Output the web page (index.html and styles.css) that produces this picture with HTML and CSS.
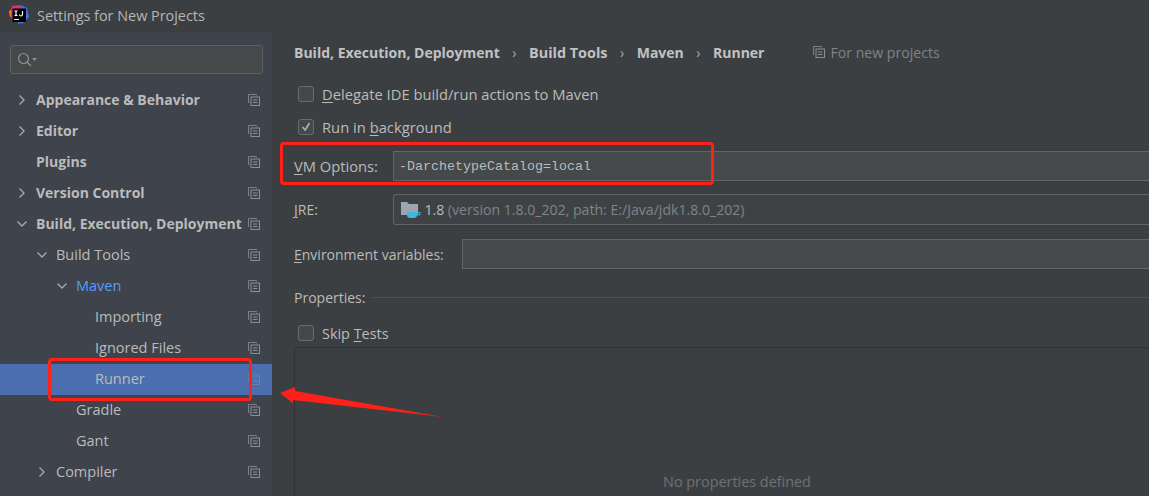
FILE: index.html
```html
<!DOCTYPE html>
<html lang="en">
<head>
    <meta charset="UTF-8">
    <meta name="viewport" content="width=device-width, initial-scale=1.0">
    <title>Settings for New Projects</title>
    <link rel="stylesheet" href="styles.css">
</head>
<body>
    <svg class="defs" width="0" height="0">
        <symbol id="copy" viewBox="0 0 12 12">
            <path d="M8.5 1.5V.5H.5v8h1" fill="none" stroke="#7d8186"/>
            <rect x="3" y="3" width="8.5" height="8.5" fill="none" stroke="#8b8f94"/>
            <path d="M5 6h4.5M5 8.500h4.500" stroke="#8b8f94"/>
        </symbol>
        <symbol id="arrow-right" viewBox="0 0 10 12">
            <path d="M2.500 1.500 7 6l-4.500 4.500" fill="none" stroke="#a8abae" stroke-width="1.300"/>
        </symbol>
        <symbol id="arrow-down" viewBox="0 0 12 10">
            <path d="M1.500 2.500 6 7l4.500-4.500" fill="none" stroke="#a8abae" stroke-width="1.300"/>
        </symbol>
    </svg>

    <header class="titlebar">
        <svg class="logo" width="20" height="20" viewBox="0 0 20 20">
            <path d="M3 1l8-1 2 4-7 12-4-3z" fill="#fe2857"/>
            <path d="M0 6l4-2 1 7-4 1z" fill="#fc801d"/>
            <path d="M12 0l6 3 2 9-5 6-6 1z" fill="#3f6fe0"/>
            <path d="M2 3h9l2 3-8 9-3-3z" fill="#b832a8"/>
            <rect x="3.500" y="3.500" width="13.500" height="13.500" fill="#000"/>
            <rect x="5" y="14" width="5" height="1" fill="#fff"/>
            <path d="M5.500 6h3M7 6v4.500M5.500 10.500h3M13.500 6v3.500a1.500 1.500 0 0 1-3 0" fill="none" stroke="#fff" stroke-width="1.200"/>
        </svg>
        <span class="title">Settings for New Projects</span>
    </header>

    <div class="content">
        <nav class="sidebar">
            <div class="search">
                <svg width="22" height="16" viewBox="0 0 22 16">
                    <circle cx="6.500" cy="6.500" r="5" fill="none" stroke="#8b8f90" stroke-width="1.200"/>
                    <path d="M10 10l4 4" stroke="#8b8f90" stroke-width="1.400"/>
                    <path d="M15 6h5l-2.500 3z" fill="#8b8f90"/>
                </svg>
            </div>
            <ul class="tree">
                <li class="row bold level-1"><svg class="arrow"><use href="#arrow-right"/></svg><span>Appearance &amp; Behavior</span><svg class="copy"><use href="#copy"/></svg></li>
                <li class="row bold level-1"><svg class="arrow"><use href="#arrow-right"/></svg><span>Editor</span><svg class="copy"><use href="#copy"/></svg></li>
                <li class="row bold level-1"><i class="arrow"></i><span>Plugins</span><svg class="copy"><use href="#copy"/></svg></li>
                <li class="row bold level-1"><svg class="arrow"><use href="#arrow-right"/></svg><span>Version Control</span><svg class="copy"><use href="#copy"/></svg></li>
                <li class="row bold level-1"><svg class="arrow"><use href="#arrow-down"/></svg><span>Build, Execution, Deployment</span><svg class="copy"><use href="#copy"/></svg></li>
                <li class="row level-2"><svg class="arrow"><use href="#arrow-down"/></svg><span>Build Tools</span><svg class="copy"><use href="#copy"/></svg></li>
                <li class="row level-3"><svg class="arrow"><use href="#arrow-down"/></svg><span class="link">Maven</span><svg class="copy"><use href="#copy"/></svg></li>
                <li class="row level-4"><span>Importing</span><svg class="copy"><use href="#copy"/></svg></li>
                <li class="row level-4"><span>Ignored Files</span><svg class="copy"><use href="#copy"/></svg></li>
                <li class="row level-4 selected"><span>Runner</span><svg class="copy"><use href="#copy"/></svg></li>
                <li class="row level-3"><i class="arrow"></i><span>Gradle</span><svg class="copy"><use href="#copy"/></svg></li>
                <li class="row level-3"><i class="arrow"></i><span>Gant</span><svg class="copy"><use href="#copy"/></svg></li>
                <li class="row level-2"><svg class="arrow"><use href="#arrow-right"/></svg><span>Compiler</span><svg class="copy"><use href="#copy"/></svg></li>
            </ul>
        </nav>

        <main class="main">
            <div class="breadcrumbs">
                <b>Build, Execution, Deployment</b><span class="sep">›</span>
                <b class="crumb-wide">Build Tools</b><span class="sep">›</span>
                <b>Maven</b><span class="sep">›</span>
                <b>Runner</b>
                <span class="scope"><svg class="copy"><use href="#copy"/></svg>For new projects</span>
            </div>

            <label class="check check-first"><i class="box"></i><span><u>D</u>elegate IDE build/run actions to Maven</span></label>
            <label class="check check-second">
                <i class="box"><svg width="16" height="16" viewBox="0 0 16 16"><path d="M4 8l3 3.500L12 3.500" fill="none" stroke="#a9acae" stroke-width="2"/></svg></i>
                <span>Run in <u>b</u>ackground</span>
            </label>

            <div class="field field-vm">
                <span class="field-label"><u>V</u>M Options:</span>
                <div class="input mono">-DarchetypeCatalog=local</div>
            </div>
            <div class="field field-jre">
                <span class="field-label"><u>J</u>RE:</span>
                <div class="input combo">
                    <svg width="20" height="18" viewBox="0 0 20 18">
                        <path d="M0 1h6l2 2h9v11H0z" fill="#9aa7b0"/>
                        <path d="M6 11h10v3a3 3 0 0 1-3 3H9a3 3 0 0 1-3-3z" fill="#40b6e0"/>
                        <path d="M16 11.500h3v2.500h-3" fill="none" stroke="#40b6e0"/>
                    </svg>
                    <span>1.8</span> <span class="muted">(version 1.8.0_202, path: E:/Java/jdk1.8.0_202)</span>
                </div>
            </div>
            <div class="field field-env">
                <span class="field-label"><u>E</u>nvironment variables:</span>
                <div class="input"></div>
            </div>

            <div class="group-title"><span>Properties:</span><i class="rule"></i></div>
            <label class="check check-skip"><i class="box"></i><span>Skip <u>T</u>ests</span></label>
            <div class="table"><span class="empty">No properties defined</span></div>
        </main>
    </div>

    <!-- red annotations drawn on top of the screenshot -->
    <div class="mark mark-vm"></div>
    <div class="mark mark-runner"></div>
    <svg class="pointer" width="170" height="36" viewBox="0 0 170 36">
        <path d="M0 6 15 0v4L163 30 13 13l0 3z" fill="#ff2119"/>
    </svg>
</body>
</html>
```

FILE: styles.css
```css
html, body {
    margin: 0;
    height: 496px;
    overflow: hidden;
}
body {
    width: 1149px;
    position: relative;
    background-color: #3c3f41;
    color: #bbbbbb;
    font-family: "Open Sans", "Noto Sans", sans-serif;
    font-size: 14px;
}
.defs {
    position: absolute;
}
svg {
    display: block;
}
u {
    text-underline-offset: 2px;
}

.titlebar {
    height: 32px;
    box-sizing: border-box;
    display: flex;
    align-items: center;
    padding: 0 0 2px 9px;
    gap: 8px;
}
.title {
    color: #b4b6b8;
    font-size: 14.4px;
}

.content {
    display: flex;
    height: 464px;
}
.sidebar {
    width: 272px;
    flex: none;
    background-color: #3e434c;
    padding-top: 13px;
    box-sizing: border-box;
}
.search {
    margin: 0 9px 0 10px;
    height: 29px;
    box-sizing: border-box;
    border: 1px solid #5e6060;
    border-radius: 3px;
    background-color: #45494a;
    display: flex;
    align-items: center;
    padding-left: 6px;
}
.tree {
    list-style: none;
    margin: 11px 0 0;
    padding: 0;
}
.row {
    height: 31px;
    box-sizing: border-box;
    display: flex;
    align-items: center;
    padding-right: 12px;
    padding-bottom: 2px;
    font-size: 14.5px;
}
.row span {
    flex: 1;
}
.row .link {
    color: #589df6;
}
.row.bold {
    font-size: 14px;
    font-weight: 700;
}
.arrow {
    width: 12px;
    height: 12px;
    margin-right: 8px;
    flex: none;
}
.copy {
    width: 12px;
    height: 12px;
    flex: none;
}
.level-1 { padding-left: 16px; }
.level-2 { padding-left: 36px; }
.level-3 { padding-left: 56px; }
.level-4 { padding-left: 95px; }
.selected {
    background-color: #4b6eaf;
}
.selected .copy {
    opacity: .6;
}

.main {
    flex: 1;
    min-width: 0;
    padding-left: 22px;
    position: relative;
}
.breadcrumbs {
    height: 42px;
    box-sizing: border-box;
    padding-bottom: 2px;
    display: flex;
    align-items: center;
    color: #c0c2c4;
}
.crumb-wide {
    font-size: 14.4px;
}
.sep {
    margin: 0 12.5px;
    color: #a8abae;
}
.scope {
    display: flex;
    align-items: center;
    gap: 5px;
    margin-left: 49px;
    color: #7f8386;
    font-size: 14.1px;
}
.check {
    display: flex;
    align-items: center;
    gap: 8px;
    height: 20px;
    padding-left: 4px;
    font-size: 14.75px;
}
.check-first { margin-top: 10px; }
.check-second { margin-top: 13px; }
.check-skip { margin-top: 16px; font-size: 14.4px; }
.box {
    width: 14px;
    height: 14px;
    flex: none;
    border: 1px solid #6b6b6b;
    border-radius: 3px;
    background-color: #43494a;
    display: flex;
    align-items: center;
    justify-content: center;
}
.field {
    display: flex;
    align-items: center;
}
.field-label {
    flex: none;
}
.field-vm { margin-top: 14px; height: 30px; }
.field-jre { margin-top: 13px; height: 31px; }
.field-env { margin-top: 14px; height: 30px; }
.field-vm .field-label { width: 99px; font-size: 14.7px; }
.field-jre .field-label { width: 99px; }
.field-env .field-label { width: 168px; }
.input {
    flex: 1;
    height: 100%;
    box-sizing: border-box;
    border: 1px solid #646464;
    border-right: none;
    background-color: #45494a;
    display: flex;
    align-items: center;
    padding-left: 5px;
}
.mono {
    font-family: "Liberation Mono", monospace;
    font-size: 13.33px;
}
.combo {
    border-radius: 3px 0 0 3px;
    padding-left: 7px;
    gap: 3.500px;
    background-color: #3f4244;
    font-size: 14.1px;
}
.muted {
    color: #808487;
}
.group-title {
    display: flex;
    align-items: center;
    gap: 7px;
    margin-top: 18px;
    height: 20px;
}
.rule {
    flex: 1;
    height: 1px;
    background-color: #515151;
}
.table {
    margin-top: 4px;
    height: 149px;
    border: 1px solid #323232;
    border-right: none;
    border-bottom: none;
    box-sizing: border-box;
    display: flex;
    justify-content: center;
    padding: 124px 0 0 30px;
    color: #6f7173;
    font-size: 14.4px;
}
.empty {
    display: block;
}

.mark {
    position: absolute;
    box-sizing: border-box;
    border: 3px solid #ff2119;
    border-radius: 4px;
}
.mark-vm {
    left: 280px;
    top: 142px;
    width: 434px;
    height: 43px;
}
.mark-runner {
    left: 48px;
    top: 358px;
    width: 204px;
    height: 43px;
}
.pointer {
    position: absolute;
    left: 280px;
    top: 387px;
}
```
